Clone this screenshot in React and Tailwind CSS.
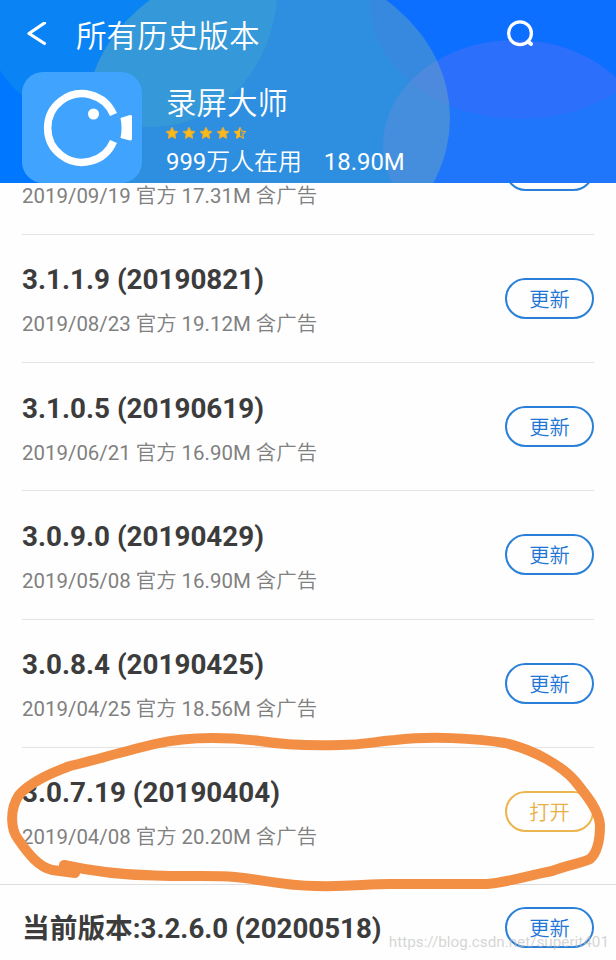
import React from 'react';

const versions = [
    { id: 1, name: '3.1.2.3 (20190918)', date: '2019/09/19', size: '17.31M' },
    { id: 2, name: '3.1.1.9 (20190821)', date: '2019/08/23', size: '19.12M' },
    { id: 3, name: '3.1.0.5 (20190619)', date: '2019/06/21', size: '16.90M' },
    { id: 4, name: '3.0.9.0 (20190429)', date: '2019/05/08', size: '16.90M' },
    { id: 5, name: '3.0.8.4 (20190425)', date: '2019/04/25', size: '18.56M' },
    { id: 6, name: '3.0.7.19 (20190404)', date: '2019/04/08', size: '20.20M', installed: true },
];

const STAR = 'M6 .6 7.7 4.1 11.6 4.6 8.8 7.3 9.5 11.2 6 9.3 2.5 11.2 3.2 7.3 .4 4.6 4.3 4.1Z';

const Star = ({ half }) => (
    <svg className="h-3 w-3 overflow-visible" viewBox="0 0 12 12">
        <path d={STAR} fill={half ? '#4f94c0' : '#fdbb1a'} stroke="#e5ac35" strokeWidth="1.2" strokeLinejoin="round" />
        {half && <path d="M6 .6V9.3L2.5 11.2 3.2 7.3 .4 4.6 4.3 4.1Z" fill="#fdbb1a" />}
    </svg>
);

const HeaderBackground = () => (
    <svg className="absolute inset-0 h-full w-full" viewBox="0 0 616 183">
        <rect width="616" height="183" fill="#0077ff" />
        <path d="M0 0H277C270 72 220 127 150 127C80 127 24 112 0 70Z" fill="#53e3ac" opacity="0.12" />
        <ellipse cx="520" cy="3" rx="150" ry="116" fill="#8231ff" opacity="0.1" />
        <ellipse cx="515" cy="145" rx="132" ry="105" fill="#f474e0" opacity="0.13" />
        <ellipse cx="268" cy="118" rx="182" ry="155" fill="#aad08c" opacity="0.27" />
    </svg>
);

const AppIcon = () => (
    <svg className="h-[111px] w-[120px] shrink-0" viewBox="0 0 120 111">
        <rect width="120" height="111" rx="21" fill="#40a4ff" />
        <path d="M91.5 42.5A34.3 34.3 0 1 0 91.5 69.5" fill="none" stroke="#fff" strokeWidth="7.5" />
        <circle cx="71.5" cy="42" r="5.5" fill="#fff" />
        <path d="M98.5 46 108 43Q110 42.500 110 44.500V66.500Q110 69 108 68.500L98.500 66Q100.500 56 98.500 46Z" fill="#fff" />
    </svg>
);

const ActionButton = ({ installed }) => (
    <button
        className={`flex h-[41px] w-[89px] shrink-0 items-center justify-center rounded-full border-2 pt-[3px] text-[20.250px] leading-7 font-[350] ${installed ? 'border-[#ebb64f] text-[#e9b043]' : 'border-[#2a80d8] text-[#1d75d4]'}`}
    >
        {installed ? '打开' : '更新'}
    </button>
);

const VersionRow = ({ version }) => (
    <div className="flex h-[128.250px] shrink-0 items-center justify-between border-b border-[#e3e3e3] last:border-transparent">
        <div className="pt-[6px]">
            <h2 className="text-[27.800px] leading-8 font-bold text-[#3c3c3c]">{version.name}</h2>
            <p className="mt-3.5 text-[20.450px] leading-7 font-[350] text-[#808080]">
                <span className="font-normal">{version.date}</span> 官方 <span className="font-normal">{version.size}</span> 含广告
            </p>
        </div>
        <ActionButton installed={version.installed} />
    </div>
);

// Hand-drawn ring around the installed version
const Highlight = () => (
    <svg className="pointer-events-none absolute inset-0 h-full w-full" viewBox="0 0 616 960">
        <path
            d="M64 865C95 872 120 875 155 875.500C190 877 210 875 235 877C265 880 285 886 315 886C350 887 365 884 390 884H487C510 882 530 875 552 871C568 865 582 863 590 859C598 852 600 838 600 825C599 811 588 797 575 781C562 766 535 750 505 743C475 738 430 736 395 740C370 742 365 745 340 745C305 746 285 745 260 741C225 737 190 736 155 744C125 751 95 760 70 766C45 775 27 786 19 795C9 810 11 830 18 839C29 855 39 867 52 870L75 873"
            fill="none"
            stroke="#f28f45"
            strokeWidth="10"
            strokeLinecap="round"
            strokeLinejoin="round"
        />
    </svg>
);

const App = () => {
    return (
        <div className="relative flex h-[960px] w-[616px] flex-col overflow-hidden bg-[#fefefe] font-[Roboto,'Noto_Sans_CJK_SC',sans-serif]">
            {/* Header */}
            <header className="relative h-[183px] shrink-0 overflow-hidden text-white">
                <HeaderBackground />
                <div className="relative flex h-[72px] items-center pl-[26px]">
                    <svg className="h-7 w-6" viewBox="0 0 24 28" fill="none" stroke="#fff" strokeWidth="3.200">
                        <path d="M18.500 1 3 11.500 18.500 21.500" strokeLinejoin="round" strokeLinecap="round" />
                    </svg>
                    <h1 className="ml-[26px] pt-0.5 text-[30.600px] leading-10 font-[350]">所有历史版本</h1>
                    <svg className="mr-[81px] mb-0.5 ml-auto h-7 w-7 overflow-visible" viewBox="0 0 28 28" fill="none" stroke="#fff" strokeWidth="3.200">
                        <circle cx="13" cy="12.300" r="11.400" />
                        <path d="M21 20.500 24 23" strokeLinecap="round" strokeWidth="4" />
                    </svg>
                </div>
                <div className="relative flex pl-[22px]">
                    <AppIcon />
                    <div className="ml-6 pt-3.5">
                        <div className="text-[30.500px] leading-9 font-[350]">录屏大师</div>
                        <div className="mt-[5px] flex gap-[5px]">
                            <Star />
                            <Star />
                            <Star />
                            <Star />
                            <Star half />
                        </div>
                        <div className="mt-[7px] flex gap-[22px] text-[23.900px] leading-8 font-[350]">
                            <span><span className="font-normal">999</span>万人在用</span>
                            <span className="font-normal">18.90M</span>
                        </div>
                    </div>
                </div>
            </header>

            {/* Version list, scrolled so the first row sits under the header */}
            <main className="h-[701px] shrink-0 overflow-hidden px-[22px]">
                <div className="-mt-[76.500px] flex flex-col">
                    {versions.map(version => (
                        <VersionRow key={version.id} version={version} />
                    ))}
                </div>
            </main>

            {/* Current version */}
            <footer className="flex h-[86px] shrink-0 items-center justify-between border-t border-[#dedede] px-[22px]">
                <h2 className="pt-0.5 text-[27.700px] font-bold text-[#3c3c3c]">当前版本:3.2.6.0 (20200518)</h2>
                <ActionButton />
            </footer>

            <Highlight />
            <div className="absolute right-[7px] bottom-[6px] text-[15.250px] leading-6 text-[#b8b8b8]/60">
                https://blog.csdn.net/superit401
            </div>
        </div>
    );
};

export default App;
